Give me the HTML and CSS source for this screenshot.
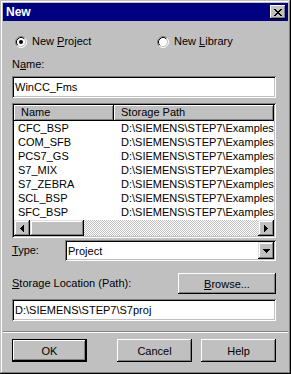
FILE: index.html
```html
<!DOCTYPE html>
<html lang="en">
<head>
  <meta charset="UTF-8">
  <title>New</title>
  <link rel="stylesheet" href="styles.css">
</head>
<body>
  <div class="window">
    <div class="titlebar">
      <span class="title">New</span>
      <button class="close">
        <svg width="8" height="7" viewBox="0 0 8 7" shape-rendering="crispEdges">
          <path d="M0 0h2v1H0zM6 0h2v1H6zM1 1h2v1H1zM5 1h2v1H5zM2 2h4v1H2zM3 3h2v1H3zM2 4h4v1H2zM1 5h2v1H1zM5 5h2v1H5zM0 6h2v1H0zM6 6h2v1H6z" fill="#000"/>
        </svg>
      </button>
    </div>

    <div class="content">
      <div class="radios">
        <label class="radio">
          <svg width="12" height="12" viewBox="0 0 12 12">
            <circle cx="6" cy="6" r="5" fill="#fff"/>
            <path d="M2.11 9.89A5.5 5.5 0 0 1 9.89 2.11" fill="none" stroke="#808080"/>
            <path d="M9.89 2.11A5.5 5.5 0 0 1 2.11 9.89" fill="none" stroke="#fff"/>
            <path d="M2.82 9.18A4.5 4.5 0 0 1 9.18 2.82" fill="none" stroke="#000"/>
            <path d="M9.18 2.82A4.5 4.5 0 0 1 2.82 9.18" fill="none" stroke="#c0c0c0"/>
            <circle cx="6" cy="6" r="2" fill="#000"/>
          </svg>
          <span>New <u>P</u>roject</span>
        </label>
        <label class="radio">
          <svg width="12" height="12" viewBox="0 0 12 12">
            <circle cx="6" cy="6" r="5" fill="#fff"/>
            <path d="M2.11 9.89A5.5 5.5 0 0 1 9.89 2.11" fill="none" stroke="#808080"/>
            <path d="M9.89 2.11A5.5 5.5 0 0 1 2.11 9.89" fill="none" stroke="#fff"/>
            <path d="M2.82 9.18A4.5 4.5 0 0 1 9.18 2.82" fill="none" stroke="#000"/>
            <path d="M9.18 2.82A4.5 4.5 0 0 1 2.82 9.18" fill="none" stroke="#c0c0c0"/>
          </svg>
          <span>New <u>L</u>ibrary</span>
        </label>
      </div>

      <div class="label name-label">N<u>a</u>me:</div>
      <div class="field name-field">WinCC_Fms</div>

      <div class="listview">
        <div class="lv-header">
          <div class="lv-col col-name">Name</div>
          <div class="lv-col col-path">Storage Path</div>
        </div>
        <div class="lv-rows">
          <div class="lv-row"><span class="cell-name">CFC_BSP</span><span class="cell-path">D:\SIEMENS\STEP7\Examples</span></div>
          <div class="lv-row"><span class="cell-name">COM_SFB</span><span class="cell-path">D:\SIEMENS\STEP7\Examples</span></div>
          <div class="lv-row"><span class="cell-name">PCS7_GS</span><span class="cell-path">D:\SIEMENS\STEP7\Examples</span></div>
          <div class="lv-row"><span class="cell-name">S7_MIX</span><span class="cell-path">D:\SIEMENS\STEP7\Examples</span></div>
          <div class="lv-row"><span class="cell-name">S7_ZEBRA</span><span class="cell-path">D:\SIEMENS\STEP7\Examples</span></div>
          <div class="lv-row"><span class="cell-name">SCL_BSP</span><span class="cell-path">D:\SIEMENS\STEP7\Examples</span></div>
          <div class="lv-row"><span class="cell-name">SFC_BSP</span><span class="cell-path">D:\SIEMENS\STEP7\Examples</span></div>
        </div>
        <div class="hscroll">
          <div class="sb-btn">
            <svg width="4" height="7" viewBox="0 0 4 7" shape-rendering="crispEdges"><path d="M3 0h1v7H3zM2 1h1v5H2zM1 2h1v3H1zM0 3h1v1H0z" fill="#000"/></svg>
          </div>
          <div class="sb-thumb"></div>
          <div class="sb-track"></div>
          <div class="sb-btn">
            <svg width="4" height="7" viewBox="0 0 4 7" shape-rendering="crispEdges"><path d="M0 0h1v7H0zM1 1h1v5H1zM2 2h1v3H2zM3 3h1v1H3z" fill="#000"/></svg>
          </div>
        </div>
      </div>

      <div class="type-row">
        <span class="label type-label"><u>T</u>ype:</span>
        <div class="combo">
          <span class="combo-text">Project</span>
          <span class="combo-btn">
            <svg width="7" height="4" viewBox="0 0 7 4" shape-rendering="crispEdges"><path d="M0 0h7v1H0zM1 1h5v1H1zM2 2h3v1H2zM3 3h1v1H3z" fill="#000"/></svg>
          </span>
        </div>
      </div>

      <div class="storage-row">
        <span class="label"><u>S</u>torage Location (Path):</span>
        <button class="btn browse"><u>B</u>rowse...</button>
      </div>
      <div class="field path-field">D:\SIEMENS\STEP7\S7proj</div>
    </div>

    <div class="separator"></div>

    <div class="buttons">
      <button class="btn default">OK</button>
      <button class="btn cancel">Cancel</button>
      <button class="btn help">Help</button>
    </div>
  </div>
</body>
</html>
```

FILE: styles.css
```css
* {
  box-sizing: border-box;
}
body {
  margin: 0;
  background: #c0c0c0;
  font-family: "Liberation Sans", Arial, sans-serif;
  font-size: 11px;
  color: #000;
}
u {
  text-underline-offset: 1px;
}
.window {
  width: 291px;
  height: 374px;
  padding: 3px;
  background: #c0c0c0;
  box-shadow: inset -1px -1px #000, inset 1px 1px #c0c0c0, inset -2px -2px #808080, inset 2px 2px #fff;
  display: flex;
  flex-direction: column;
}
.titlebar {
  height: 18px;
  background: #000080;
  display: flex;
  align-items: center;
  justify-content: space-between;
  padding: 0 2px 0 3px;
}
.title {
  color: #fff;
  font-weight: bold;
  font-size: 12px;
}
.close {
  width: 16px;
  height: 14px;
  padding: 0;
  border: 0;
  background: #c0c0c0;
  box-shadow: inset -1px -1px #000, inset 1px 1px #fff, inset -2px -2px #808080;
  display: flex;
  align-items: center;
  justify-content: center;
}
.content {
  padding: 0 12px 0 9px;
}
.label {
  line-height: 13px;
  white-space: nowrap;
}

/* radio buttons */
.radios {
  margin-top: 14px;
  height: 13px;
  padding-left: 3px;
  display: grid;
  grid-template-columns: 142px auto;
}
.radio {
  display: flex;
  align-items: center;
  line-height: 13px;
}
.radio svg {
  margin-right: 5px;
  flex: none;
}

.name-label {
  margin-top: 10px;
}
.field {
  background: #fff;
  box-shadow: inset 1px 1px #808080, inset -1px -1px #fff, inset 2px 2px #000, inset -2px -2px #c0c0c0;
  padding: 0 3px;
  display: flex;
  align-items: center;
  line-height: 13px;
  white-space: nowrap;
  overflow: hidden;
}
.name-field {
  margin-top: 5px;
  height: 22px;
}

/* list view */
.listview {
  margin-top: 5px;
  height: 135px;
  background: #fff;
  padding: 2px;
  box-shadow: inset 1px 1px #808080, inset -1px -1px #fff, inset 2px 2px #000, inset -2px -2px #c0c0c0;
  display: flex;
  flex-direction: column;
  overflow: hidden;
}
.lv-header {
  height: 16px;
  display: flex;
  flex: none;
}
.lv-col {
  background: #c0c0c0;
  box-shadow: inset -1px -1px #000, inset 1px 1px #fff, inset -2px -2px #808080;
  line-height: 15px;
  padding-left: 7px;
  white-space: nowrap;
}
.col-name {
  width: 100px;
}
.col-path {
  flex: 1;
}
.lv-rows {
  flex: 1;
  overflow: hidden;
}
.lv-row {
  height: 14px;
  line-height: 14px;
  display: flex;
  white-space: nowrap;
}
.cell-name {
  width: 100px;
  padding-left: 4px;
  flex: none;
}
.cell-path {
  padding-left: 7px;
}
.hscroll {
  height: 16px;
  display: flex;
  flex: none;
}
.sb-btn,
.sb-thumb {
  background: #c0c0c0;
  box-shadow: inset -1px -1px #000, inset 1px 1px #dfdfdf, inset -2px -2px #808080, inset 2px 2px #fff;
}
.sb-btn {
  width: 16px;
  display: flex;
  align-items: center;
  justify-content: center;
  flex: none;
}
.sb-thumb {
  width: 54px;
  flex: none;
}
.sb-track {
  flex: 1;
  background: repeating-conic-gradient(#fff 0 25%, #c0c0c0 0 50%) 0 0 / 2px 2px;
}

/* combo */
.type-row {
  margin-top: 2px;
  height: 21px;
  display: flex;
  align-items: center;
}
.type-label {
  width: 53px;
  flex: none;
}
.combo {
  flex: 1;
  height: 21px;
  background: #fff;
  padding: 2px;
  box-shadow: inset 1px 1px #808080, inset -1px -1px #fff, inset 2px 2px #000, inset -2px -2px #c0c0c0;
  display: flex;
  align-items: center;
}
.combo-text {
  flex: 1;
  padding-left: 1px;
}
.combo-btn {
  width: 16px;
  height: 17px;
  background: #c0c0c0;
  box-shadow: inset -1px -1px #000, inset 1px 1px #dfdfdf, inset -2px -2px #808080, inset 2px 2px #fff;
  display: flex;
  align-items: center;
  justify-content: center;
}

/* buttons */
.btn {
  font-family: inherit;
  font-size: 11px;
  color: #000;
  background: #c0c0c0;
  border: 0;
  padding: 0;
  box-shadow: inset -1px -1px #000, inset 1px 1px #fff, inset -2px -2px #808080;
}
.btn.default {
  box-shadow: inset 0 0 0 1px #000, inset -2px -2px #000, inset 2px 2px #fff, inset -3px -3px #808080;
}
.storage-row {
  margin-top: 12px;
  height: 21px;
  display: flex;
  align-items: center;
  justify-content: space-between;
}
.browse {
  width: 98px;
  height: 21px;
}
.path-field {
  margin-top: 5px;
  height: 22px;
}
.separator {
  margin-top: 10px;
  height: 2px;
  border-top: 1px solid #808080;
  border-bottom: 1px solid #fff;
}
.buttons {
  margin-top: 6px;
  padding-left: 9px;
  display: flex;
}
.buttons .btn {
  width: 75px;
  height: 23px;
}
.cancel {
  margin-left: 30px;
}
.help {
  margin-left: 9px;
}
```
